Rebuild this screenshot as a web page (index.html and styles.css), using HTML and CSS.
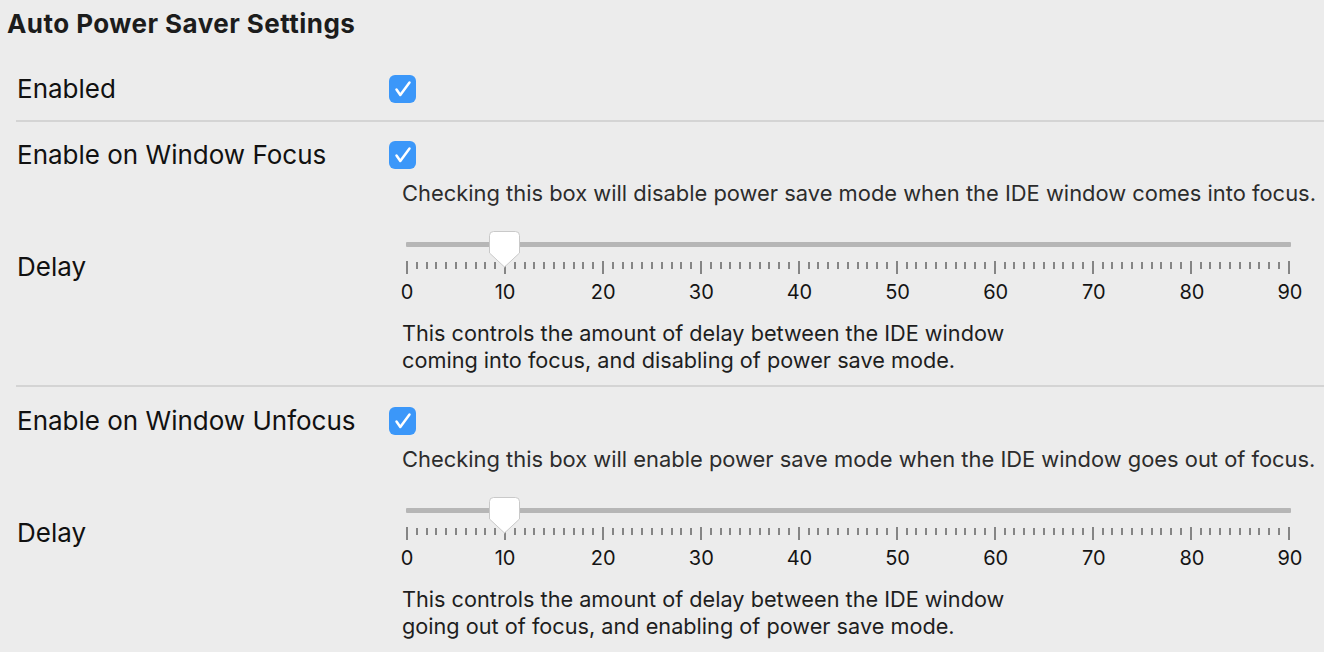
FILE: index.html
```html
<!DOCTYPE html>
<html>
<head>
<meta charset="utf-8">
<link rel="stylesheet" href="styles.css">
</head>
<body>
<h1 class="title">Auto Power Saver Settings</h1>

<div class="row first">
  <div class="label">Enabled</div>
  <div class="control"><svg class="check" width="28" height="28" viewBox="0 0 28 28"><rect x="0" y="0" width="27" height="28" rx="6" fill="#3b97f9"/><path d="M7.5 14.5 L11.3 20 L20.5 7.5" fill="none" stroke="#fff" stroke-width="2.5" stroke-linecap="round" stroke-linejoin="round"/></svg></div>
</div>
<div class="sep sep-a"></div>

<div class="section">
  <div class="row">
    <div class="label">Enable on Window Focus</div>
    <div class="control"><svg class="check" width="28" height="28" viewBox="0 0 28 28"><rect x="0" y="0" width="27" height="28" rx="6" fill="#3b97f9"/><path d="M7.5 14.5 L11.3 20 L20.5 7.5" fill="none" stroke="#fff" stroke-width="2.5" stroke-linecap="round" stroke-linejoin="round"/></svg></div>
  </div>
  <div class="row desc-row">
    <div></div>
    <div class="desc">Checking this box will disable power save mode when the IDE window comes into focus.</div>
  </div>
  <div class="row slider-row">
    <div class="label">Delay</div>
    <div class="slider">
      <div class="track"></div>
      <svg class="thumb" width="31" height="37" viewBox="0 0 31 37"><path d="M4.5 0.5 H26.5 Q30.5 0.5 30.5 4.5 V22 L15.5 36 L0.5 22 V4.5 Q0.5 0.5 4.5 0.5 Z" fill="#fff" stroke="#c9c9c9" stroke-width="1"/></svg>
      <div class="ticks">
        <i class="M"></i><i></i><i></i><i></i><i></i><i></i><i></i><i></i><i></i><i></i>
        <i class="M"></i><i></i><i></i><i></i><i></i><i></i><i></i><i></i><i></i><i></i>
        <i class="M"></i><i></i><i></i><i></i><i></i><i></i><i></i><i></i><i></i><i></i>
        <i class="M"></i><i></i><i></i><i></i><i></i><i></i><i></i><i></i><i></i><i></i>
        <i class="M"></i><i></i><i></i><i></i><i></i><i></i><i></i><i></i><i></i><i></i>
        <i class="M"></i><i></i><i></i><i></i><i></i><i></i><i></i><i></i><i></i><i></i>
        <i class="M"></i><i></i><i></i><i></i><i></i><i></i><i></i><i></i><i></i><i></i>
        <i class="M"></i><i></i><i></i><i></i><i></i><i></i><i></i><i></i><i></i><i></i>
        <i class="M"></i><i></i><i></i><i></i><i></i><i></i><i></i><i></i><i></i><i></i>
        <i class="M"></i>
      </div>
      <div class="nums"><span><b>0</b></span><span><b>10</b></span><span><b>20</b></span><span><b>30</b></span><span><b>40</b></span><span><b>50</b></span><span><b>60</b></span><span><b>70</b></span><span><b>80</b></span><span><b>90</b></span></div>
    </div>
  </div>
  <div class="row desc-row2">
    <div></div>
    <div class="desc2">This controls the amount of delay between the IDE window<br>coming into focus, and disabling of power save mode.</div>
  </div>
</div>
<div class="sep sep-b"></div>

<div class="section second">
  <div class="row">
    <div class="label">Enable on Window Unfocus</div>
    <div class="control"><svg class="check" width="28" height="28" viewBox="0 0 28 28"><rect x="0" y="0" width="27" height="28" rx="6" fill="#3b97f9"/><path d="M7.5 14.5 L11.3 20 L20.5 7.5" fill="none" stroke="#fff" stroke-width="2.5" stroke-linecap="round" stroke-linejoin="round"/></svg></div>
  </div>
  <div class="row desc-row">
    <div></div>
    <div class="desc">Checking this box will enable power save mode when the IDE window goes out of focus.</div>
  </div>
  <div class="row slider-row">
    <div class="label">Delay</div>
    <div class="slider">
      <div class="track"></div>
      <svg class="thumb" width="31" height="37" viewBox="0 0 31 37"><path d="M4.5 0.5 H26.5 Q30.5 0.5 30.5 4.5 V22 L15.5 36 L0.5 22 V4.5 Q0.5 0.5 4.5 0.5 Z" fill="#fff" stroke="#c9c9c9" stroke-width="1"/></svg>
      <div class="ticks">
        <i class="M"></i><i></i><i></i><i></i><i></i><i></i><i></i><i></i><i></i><i></i>
        <i class="M"></i><i></i><i></i><i></i><i></i><i></i><i></i><i></i><i></i><i></i>
        <i class="M"></i><i></i><i></i><i></i><i></i><i></i><i></i><i></i><i></i><i></i>
        <i class="M"></i><i></i><i></i><i></i><i></i><i></i><i></i><i></i><i></i><i></i>
        <i class="M"></i><i></i><i></i><i></i><i></i><i></i><i></i><i></i><i></i><i></i>
        <i class="M"></i><i></i><i></i><i></i><i></i><i></i><i></i><i></i><i></i><i></i>
        <i class="M"></i><i></i><i></i><i></i><i></i><i></i><i></i><i></i><i></i><i></i>
        <i class="M"></i><i></i><i></i><i></i><i></i><i></i><i></i><i></i><i></i><i></i>
        <i class="M"></i><i></i><i></i><i></i><i></i><i></i><i></i><i></i><i></i><i></i>
        <i class="M"></i>
      </div>
      <div class="nums"><span><b>0</b></span><span><b>10</b></span><span><b>20</b></span><span><b>30</b></span><span><b>40</b></span><span><b>50</b></span><span><b>60</b></span><span><b>70</b></span><span><b>80</b></span><span><b>90</b></span></div>
    </div>
  </div>
  <div class="row desc-row2">
    <div></div>
    <div class="desc2">This controls the amount of delay between the IDE window<br>going out of focus, and enabling of power save mode.</div>
  </div>
</div>
</body>
</html>
```

FILE: styles.css
```css
* { box-sizing: border-box; }
html, body { margin: 0; padding: 0; }
body {
  background: #ececec;
  font-family: Inter, "Noto Sans", sans-serif;
  color: #141414;
  width: 1324px;
  height: 652px;
  overflow: hidden;
}
.title {
  margin: 9px 0 0 7px;
  font-size: 26px;
  line-height: 30px;
  font-weight: 700;
  letter-spacing: 0.45px;
  color: #1c1c1c;
}
.row {
  display: grid;
  grid-template-columns: 372px 1fr;
  padding-left: 17px;
  align-items: center;
}
.row.first { margin-top: 36px; }
.section .row:first-child { margin-top: 19px; }
.section.second .row:first-child { margin-top: 20px; }
.label {
  font-size: 26px;
  line-height: 28px;
  color: #111;
}
.control { height: 28px; }
.check { display: block; }
.sep {
  height: 2px;
  background: #d4d4d4;
  margin-left: 16px;
}
.sep-a { margin-top: 17px; }
.sep-b { margin-top: 11px; }
.desc-row { margin-top: 11px; }
.desc {
  padding-left: 13px;
  font-size: 21.9px;
  line-height: 27px;
  color: #2c2c2c;
}
.slider-row { margin-top: 24px; }
.slider {
  position: relative;
  margin-left: 17px;
  width: 885px;
  padding-top: 11px;
}
.track {
  height: 5px;
  background: #b6b6b6;
  border-radius: 1px;
}
.thumb {
  position: absolute;
  left: 83px;
  top: 0;
}
.ticks {
  margin-top: 14px;
  height: 14px;
  display: flex;
  justify-content: space-between;
  align-items: flex-start;
}
.ticks i {
  display: block;
  width: 2px;
  height: 7px;
  margin-top: 1px;
  background: #858585;
}
.ticks i.M {
  height: 13px;
  margin-top: 0;
}
.nums {
  margin-top: 6px;
  display: flex;
  justify-content: space-between;
  padding: 0 1px;
  height: 22px;
}
.nums span {
  width: 0;
  display: flex;
  justify-content: center;
}
.nums b {
  font-weight: 400;
  font-size: 20px;
  line-height: 22px;
  color: #141414;
}
.desc-row2 { margin-top: 17px; }
.desc2 {
  padding-left: 13px;
  font-size: 21.7px;
  line-height: 27px;
  color: #1e1e1e;
}
```
